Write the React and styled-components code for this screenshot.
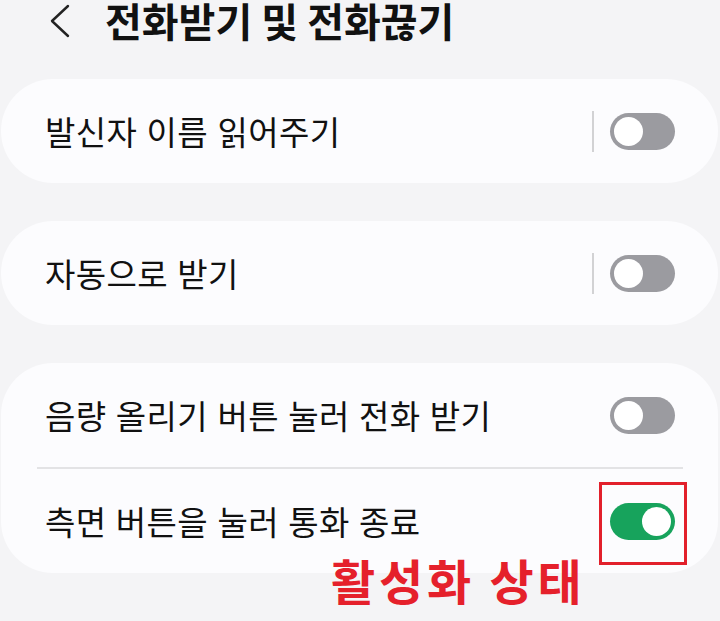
import React from 'react';
import styled, { createGlobalStyle } from 'styled-components';

const GlobalStyle = createGlobalStyle`
  html, body {
    margin: 0;
    padding: 0;
    background: #f4f4f6;
    overflow: hidden;
  }
  * { box-sizing: border-box; }
`;

const FONT = `'Noto Sans CJK KR', 'Noto Sans', sans-serif`;

/* ─── Page ─────────────────────────────────────────────────────────── */

const Page = styled.div`
  position: relative;
  width: 720px;
  height: 621px;
  background: #f4f4f6;
  font-family: ${FONT};
  display: flex;
  flex-direction: column;
  gap: 38px;
  padding: 0 2px 0 1px;
`;

/* ─── Header ───────────────────────────────────────────────────────── */

const Header = styled.header`
  height: 41px;
  display: flex;
  align-items: center;
  gap: 34px;
  padding-left: 48px;
`;

const BackIcon = styled.svg`
  width: 22px;
  height: 34px;
  flex-shrink: 0;
`;

const Title = styled.h1`
  margin: 0;
  font-size: 40px;
  font-weight: 700;
  letter-spacing: 0;
  color: #111;
  line-height: 41px;
  white-space: nowrap;
`;

/* ─── Cards ────────────────────────────────────────────────────────── */

const Card = styled.section`
  background: #fcfcfe;
  border-radius: 52px;
  display: flex;
  flex-direction: column;
`;

const Row = styled.div`
  height: 104px;
  display: flex;
  align-items: center;
  padding: 0 43px 0 44px;
`;

const Label = styled.span`
  flex: 1;
  font-size: 33px;
  font-weight: 400;
  letter-spacing: 0.4px;
  word-spacing: 1.5px;
  color: #111;
  white-space: nowrap;
`;

const Separator = styled.div`
  width: 2px;
  height: 41px;
  background: #d2d2d4;
  margin-right: 16px;
`;

const Divider = styled.div`
  height: 2px;
  background: #e3e3e5;
  margin: 0 35px 0 36px;
`;

const Track = styled.div`
  width: 65px;
  height: 37px;
  border-radius: 19px;
  background: ${({ on }) => (on ? '#17a35c' : '#9b9ba0')};
  display: flex;
  align-items: center;
  justify-content: ${({ on }) => (on ? 'flex-end' : 'flex-start')};
  padding: 0 4px;
`;

const Thumb = styled.div`
  width: 29px;
  height: 29px;
  border-radius: 50%;
  background: #ffffff;
`;

/* ─── Annotation ───────────────────────────────────────────────────── */

const Highlight = styled.div`
  position: absolute;
  left: 599px;
  top: 482px;
  width: 88px;
  height: 83px;
  border: 3px solid #e2202b;
`;

const Note = styled.div`
  position: absolute;
  left: 331px;
  top: 551px;
  font-size: 48px;
  font-weight: 700;
  letter-spacing: 3.8px;
  color: #e5202b;
  line-height: 1.2;
  white-space: nowrap;
`;

const Toggle = ({ on }) => (
  <Track on={on}>
    <Thumb />
  </Track>
);

const App = () => (
  <>
    <GlobalStyle />
    <Page>
      <Header>
        <BackIcon viewBox="0 0 22 34">
          <path d="M19 2 L3 17 L19 32" fill="none" stroke="#222" strokeWidth="2.4" strokeLinecap="round" strokeLinejoin="round" />
        </BackIcon>
        <Title>전화받기 및 전화끊기</Title>
      </Header>

      <Card>
        <Row>
          <Label>발신자 이름 읽어주기</Label>
          <Separator />
          <Toggle />
        </Row>
      </Card>

      <Card>
        <Row>
          <Label>자동으로 받기</Label>
          <Separator />
          <Toggle />
        </Row>
      </Card>

      <Card>
        <Row>
          <Label>음량 올리기 버튼 눌러 전화 받기</Label>
          <Toggle />
        </Row>
        <Divider />
        <Row>
          <Label>측면 버튼을 눌러 통화 종료</Label>
          <Toggle on />
        </Row>
      </Card>

      <Highlight />
      <Note>활성화 상태</Note>
    </Page>
  </>
);

export default App;
